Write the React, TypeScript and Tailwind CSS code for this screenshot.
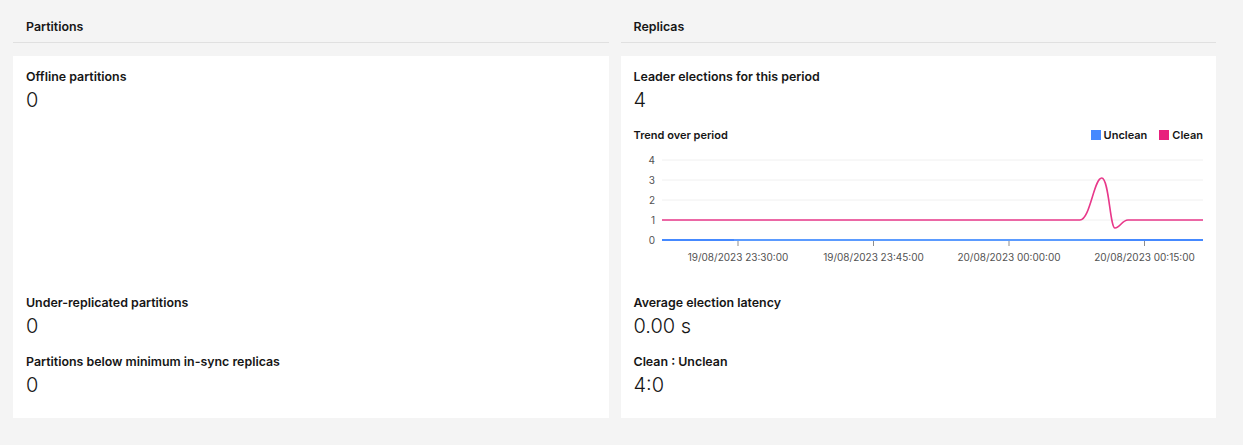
import React from "react";

const font = { fontFamily: "Inter, 'Noto Sans', sans-serif" };

const Metric = ({ label, value }: { label: string; value: string }) => (
    <div>
        <div className="text-[12.4px] leading-4 font-semibold text-[#161616]">{label}</div>
        <div className="mt-0.5 text-[20px] leading-[26px] font-light text-[#161616]">{value}</div>
    </div>
);

const SectionHeader = ({ title }: { title: string }) => (
    <div className="h-[43px] border-b border-[#e0e0e0] px-[13px] pt-[19px]">
        <div className="text-[12.4px] leading-4 font-semibold text-[#161616]">{title}</div>
    </div>
);

const ticks = [
    { x: 104, label: "19/08/2023 23:30:00" },
    { x: 239.5, label: "19/08/2023 23:45:00" },
    { x: 375, label: "20/08/2023 00:00:00" },
    { x: 510.5, label: "20/08/2023 00:15:00" },
];

const TrendChart = () => (
    <svg width="569" height="124" className="mt-px block">
        {[0, 1, 2, 3, 4].map((v) => (
            <g key={v}>
                <line x1="28" x2="569" y1={96 - v * 20} y2={96 - v * 20} stroke="#f0f0f0" strokeWidth="1" />
                <text x="21" y={100 - v * 20} textAnchor="end" fontSize="10" fill="#525252">
                    {v}
                </text>
            </g>
        ))}
        {ticks.map((t) => (
            <g key={t.label}>
                <line x1={t.x} x2={t.x} y1="97" y2="102" stroke="#8d8d8d" strokeWidth="1" />
                <text x={t.x} y="117" textAnchor="middle" fontSize="10" fill="#525252">
                    {t.label}
                </text>
            </g>
        ))}
        <line x1="28" x2="569" y1="96" y2="96" stroke="#4589ff" strokeWidth="2" />
        <line x1="100" x2="466" y1="96" y2="96" stroke="#5b9bff" strokeWidth="2" />
        <path
            d="M28 76 H446 C456 76 460 34 467.7 34 C475 34 476 84 481 84 C486 84 488 76 494 76 H569"
            fill="none"
            stroke="#e8388a"
            strokeWidth="1.6"
        />
    </svg>
);

const App = () => {
    return (
        <div style={font} className="min-h-screen w-full bg-[#f4f4f4] pl-[13px] pr-[27px]">
            <div className="grid grid-cols-2 gap-3">
                <div>
                    <SectionHeader title="Partitions" />
                    <div className="mt-[13px] flex h-[362px] flex-col justify-between bg-white px-[13px] pt-[13px] pb-5">
                        <Metric label="Offline partitions" value="0" />
                        <div className="flex flex-col gap-[15px]">
                            <Metric label="Under-replicated partitions" value="0" />
                            <Metric label="Partitions below minimum in-sync replicas" value="0" />
                        </div>
                    </div>
                </div>
                <div>
                    <SectionHeader title="Replicas" />
                    <div className="mt-[13px] flex h-[362px] flex-col justify-between bg-white px-[13px] pt-[13px] pb-5">
                        <div>
                            <Metric label="Leader elections for this period" value="4" />
                            <div className="mt-[14px] flex items-center justify-between text-[11px] leading-4 font-semibold text-[#161616]">
                                <span>Trend over period</span>
                                <div className="flex items-center gap-3">
                                    <span className="flex items-center gap-[3px]">
                                        <span className="inline-block h-[10px] w-[10px] bg-[#4589ff]" />
                                        Unclean
                                    </span>
                                    <span className="flex items-center gap-[3px]">
                                        <span className="inline-block h-[10px] w-[10px] bg-[#e8217d]" />
                                        Clean
                                    </span>
                                </div>
                            </div>
                            <TrendChart />
                        </div>
                        <div className="flex flex-col gap-[15px]">
                            <Metric label="Average election latency" value="0.00 s" />
                            <Metric label="Clean : Unclean" value="4:0" />
                        </div>
                    </div>
                </div>
            </div>
        </div>
    );
};

export default App;
